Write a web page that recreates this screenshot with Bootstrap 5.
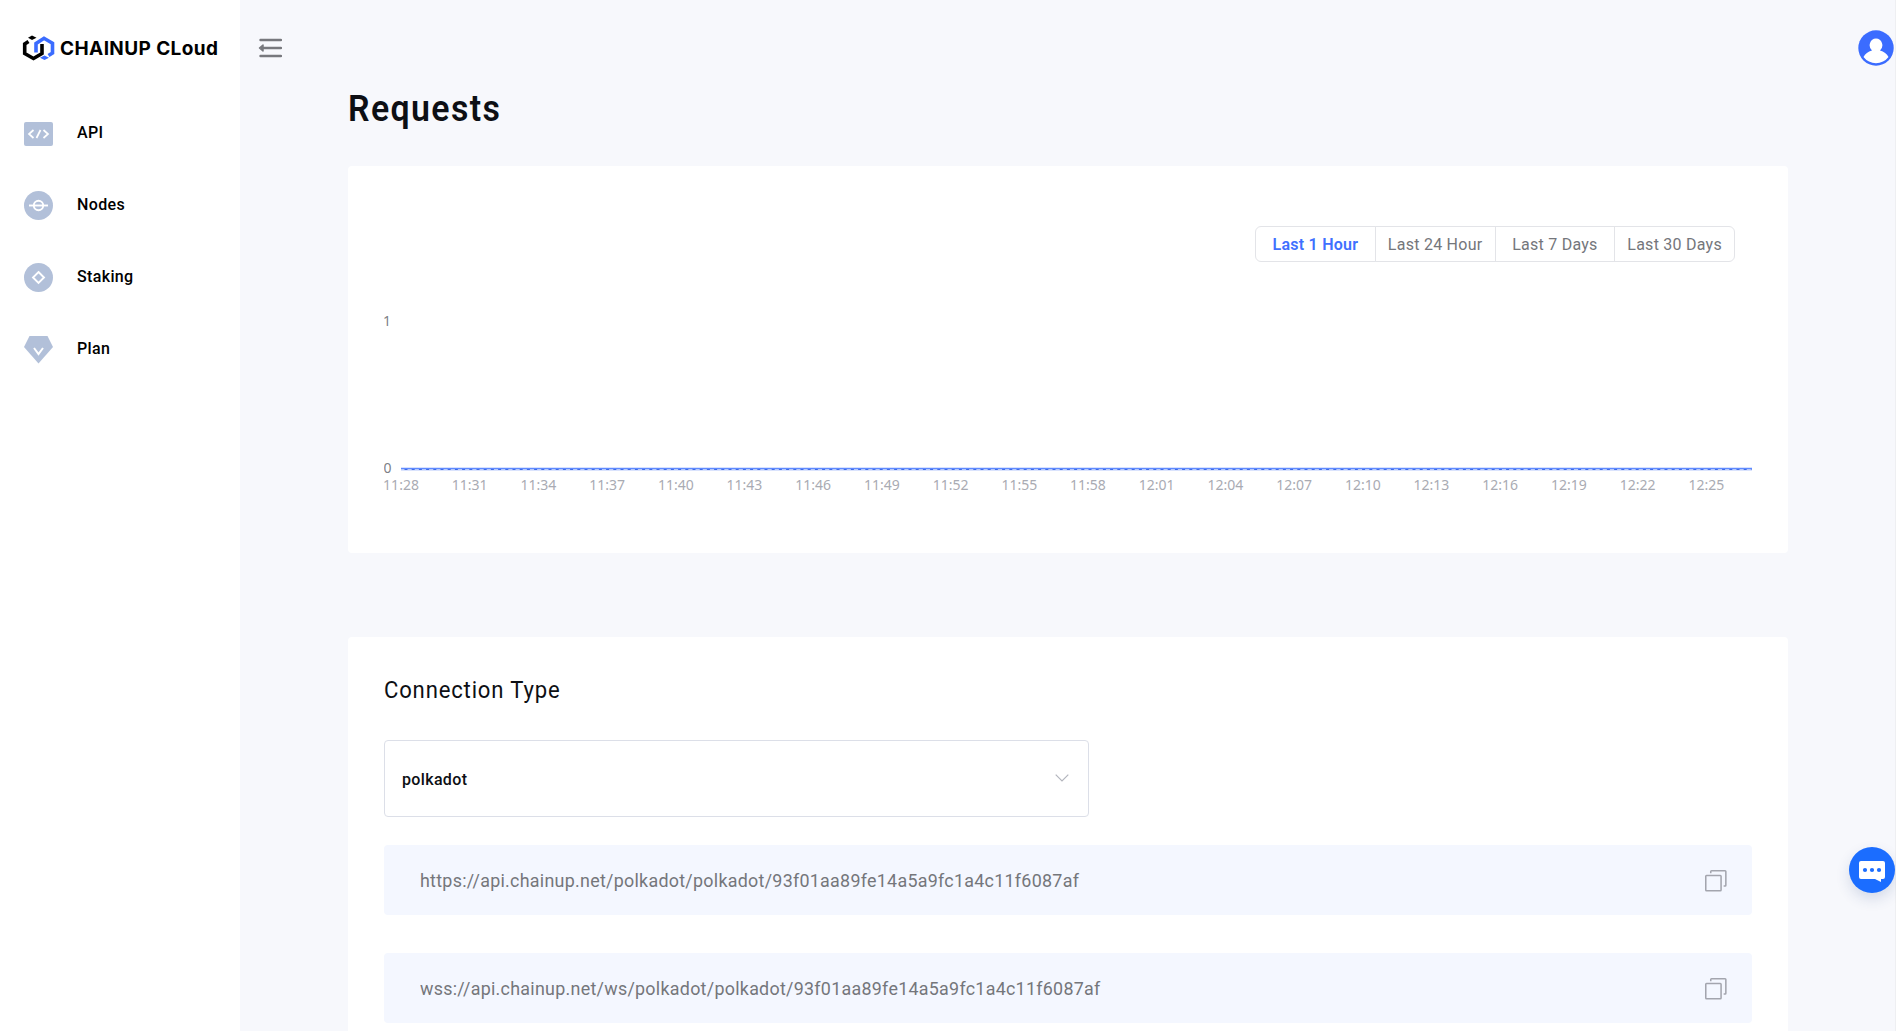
<!DOCTYPE html>
<html lang="en">
<head>
<meta charset="utf-8">
<title>Requests</title>
<link href="https://cdn.jsdelivr.net/npm/bootstrap@5.3.0/dist/css/bootstrap.min.css" rel="stylesheet">
<style>
body{font-family:Roboto,"Liberation Sans",sans-serif;background:#f7f8fc;color:#0d0f14;height:1031px;overflow:hidden}
.side{width:240px;height:1031px;background:#fff}
.brand{height:96px;padding:0 0 0 22px;margin-bottom:1px;gap:4px}
.wordmark{font:700 19px/1 Inter,sans-serif;color:#000;letter-spacing:.4px;white-space:nowrap}
.side .nav-link{height:72px;padding:0 0 0 24px;color:#000;font-weight:500;font-size:16px;gap:24px;letter-spacing:.35px}
.side .nav-link svg{width:29px;height:29px}
.topbar{height:96px;padding:0 2px 0 18px}
.main{height:1031px;overflow:hidden}
.page{padding:0 108px}
.page-title{font-size:36px;font-weight:600;line-height:44px;margin:-9px 0 35px}
.page-title .fit{transform:scaleX(.94);letter-spacing:1.5px}
.panel{background:#fff;border-radius:4px}
.usage{height:387px;padding:60px 36px 0;margin-bottom:84px}
.range{width:480px;height:36px;margin-right:17px}
.range .btn{width:120px;padding:1px 0 0;border-color:#e3e4e8;color:#74767b;font-size:16px;line-height:34px;white-space:nowrap;letter-spacing:.25px}
.range .btn.active{background:#fff;color:#3f70ff;border-color:#e3e4e8;font-weight:600}
.chart{display:block}
.chart text{font:14px "Noto Sans",sans-serif;fill:#a9abb3;text-anchor:middle}
.chart .ytick{fill:#7d7f86}
.conn{height:500px;padding:37px 36px 0}
.conn h2{font-size:24px;font-weight:400;line-height:32px;margin:0 0 34px}
.conn h2 .fit{transform:scaleX(.92);letter-spacing:.9px}
.chain{width:705px;height:77px;border:1px solid #dcdfe8;border-radius:4px;padding:0 19px 0 17px;font-size:16px;font-weight:500;margin-bottom:28px;letter-spacing:.35px}
.chain span{padding-top:2px}
.chain svg{margin-top:-1px}
.endpoint{height:70px;background:#f4f7ff;border-radius:4px;padding:1px 25px 0 36px;color:#74767b;font-size:19px;margin-bottom:38px}
.endpoint .fit{transform:scaleX(.94);letter-spacing:.3px;padding-top:1px}
.fit{display:inline-block;transform-origin:0 50%;white-space:nowrap}
.chat{position:fixed;left:1849px;top:847px;width:46px;height:46px;border-radius:50%;background:#1b6dff;box-shadow:0 6px 14px rgba(40,70,130,.16)}
.edge{position:fixed;right:0;top:0;width:1px;height:100%;background:#eeeff2}
</style>
</head>
<body>
<div class="d-flex">
<aside class="side flex-shrink-0">
<div class="brand d-flex align-items-center">
<svg width="34" height="28" viewBox="0 0 34 28"><g fill="none" stroke-width="3.600"><path stroke="#3b6cff" d="M14 18.500V9.500L22 4.300l8.500 5V19l-4 2.500"/><path stroke="#000" d="M6.500 7.500 2.700 10v9.500l8.800 5 8.500-5V10"/></g><path d="m10 1.500 4.500 2.300L10 6 6 3.800z"/><path fill="#3b6cff" d="m22.500 21.500 4.500 2.300-4.500 2.200-4.500-2.200z"/></svg>
<span class="wordmark">CHAINUP CLoud</span>
</div>
<nav class="nav flex-column">
<a class="nav-link d-flex align-items-center" href="#"><svg viewBox="0 0 29 29"><rect y="3" width="29" height="24" rx="2" fill="#b2c0d9"/><path d="m9.500 11-4.500 4 4.500 4m10-8 4.500 4-4.500 4M16.500 11l-4 8" fill="none" stroke="#fff" stroke-width="1.700"/></svg><span>API</span></a>
<a class="nav-link d-flex align-items-center" href="#"><svg viewBox="0 0 29 29"><circle cx="14.500" cy="14.500" r="14.500" fill="#b2c0d9"/><g fill="none" stroke="#fff" stroke-width="1.900"><circle cx="14.500" cy="14.500" r="4.700"/><path d="M5 14.500h19"/></g></svg><span>Nodes</span></a>
<a class="nav-link d-flex align-items-center" href="#"><svg viewBox="0 0 29 29"><circle cx="14.500" cy="14.500" r="14.500" fill="#b2c0d9"/><path d="m14.500 9 5.500 5.500-5.500 5.500L9 14.500z" fill="none" stroke="#fff" stroke-width="1.900"/></svg><span>Staking</span></a>
<a class="nav-link d-flex align-items-center" href="#"><svg viewBox="0 0 29 29"><path d="M5.500 1h18L29 12 14.500 28.500 0 12z" fill="#b2c0d9"/><path d="m10 13 4.500 6 4.500-6" fill="none" stroke="#fff" stroke-width="2"/></svg><span>Plan</span></a>
</nav>
</aside>
<main class="main flex-grow-1">
<header class="topbar d-flex align-items-center justify-content-between">
<svg width="24" height="20" viewBox="0 0 24 20"><path d="M2.500 2H23M5 10h18M2.500 18H23" stroke="#77787d" stroke-width="2.400" stroke-linecap="round"/><path d="M1.500 10 5 7v6z" fill="#77787d" stroke="#77787d" stroke-width="1.500" stroke-linejoin="round"/></svg>
<svg width="36" height="36" viewBox="0 0 36 36"><circle cx="18" cy="18" r="17.700" fill="#3b6cff"/><path d="M18 8.500a6.500 6.800 0 0 1 4 12q6 1.500 8.500 6.500a15.700 15.700 0 0 1-25 0q2.500-5 8.500-6.500a6.500 6.800 0 0 1 4-12z" fill="#fff"/></svg>
</header>
<div class="page">
<h1 class="page-title"><span class="fit">Requests</span></h1>
<section class="panel usage">
<div class="d-flex justify-content-end"><div class="btn-group range">
<button class="btn active">Last 1 Hour</button><button class="btn">Last 24 Hour</button><button class="btn">Last 7 Days</button><button class="btn">Last 30 Days</button>
</div></div>
<svg class="chart" width="1368" height="250" viewBox="0 0 1368 250">
<text class="ytick" x="3" y="64">1</text><text class="ytick" x="3.500" y="210.500">0</text>
<path d="M17 206.500h1351" stroke="#5f8aff" stroke-width="1.600"/><path d="M17 207.800h1351" stroke="#b5c8fb" stroke-width="1.600"/><path d="M20.500 207.500h1347" stroke="#3f6be8" stroke-dasharray="3 4.200"/>
<g id="ticks"></g>
</svg>
</section>
<section class="panel conn">
<h2><span class="fit">Connection Type</span></h2>
<div class="chain d-flex align-items-center justify-content-between"><span>polkadot</span><svg width="14" height="8" viewBox="0 0 14 8"><path d="m.7.700 6.300 6.300L13.300.700" fill="none" stroke="#b3b5bd" stroke-width="1.200"/></svg></div>
<div class="endpoint d-flex align-items-center justify-content-between"><span class="fit">https://api.chainup.net/polkadot/polkadot/93f01aa89fe14a5a9fc1a4c11f6087af</span>
<svg width="22" height="22" viewBox="0 0 23 23" fill="none" stroke="#a3a5ae" stroke-width="1.600"><rect x=".8" y="5.800" width="16" height="16" rx=".8"/><path d="M6 3.500V1.600q0-.8.8-.8H21q.8 0 .8.800V16q0 .8-.8.800h-1.500"/></svg></div>
<div class="endpoint d-flex align-items-center justify-content-between"><span class="fit">wss://api.chainup.net/ws/polkadot/polkadot/93f01aa89fe14a5a9fc1a4c11f6087af</span>
<svg width="22" height="22" viewBox="0 0 23 23" fill="none" stroke="#a3a5ae" stroke-width="1.600"><rect x=".8" y="5.800" width="16" height="16" rx=".8"/><path d="M6 3.500V1.600q0-.8.8-.8H21q.8 0 .8.800V16q0 .8-.8.800h-1.500"/></svg></div>
</section>
</div>
</main>
</div>
<div class="edge"></div>
<div class="chat"><svg class="d-block" width="46" height="46" viewBox="0 0 46 46"><path d="M12 14h22q2 0 2 2v14q0 2-2 2h-2v3l-6-3H12q-2 0-2-2V16q0-2 2-2z" fill="#fff"/><g fill="#1b6dff"><circle cx="16" cy="23" r="2.100"/><circle cx="23" cy="23" r="2.100"/><circle cx="30" cy="23" r="2.100"/></g></svg></div>
<script>
// One label every three minutes, starting at 11:28
const ticks = document.getElementById('ticks');
for (let i = 0; i < 20; i++) {
  const m = 688 + i * 3;
  const t = document.createElementNS('http://www.w3.org/2000/svg', 'text');
  t.setAttribute('x', 17 + i * 68.7);
  t.setAttribute('y', 228);
  t.textContent = Math.floor(m / 60) + ':' + String(m % 60).padStart(2, '0');
  ticks.appendChild(t);
}
</script>
<script src="https://cdn.jsdelivr.net/npm/bootstrap@5.3.0/dist/js/bootstrap.bundle.min.js"></script>
</body>
</html>
